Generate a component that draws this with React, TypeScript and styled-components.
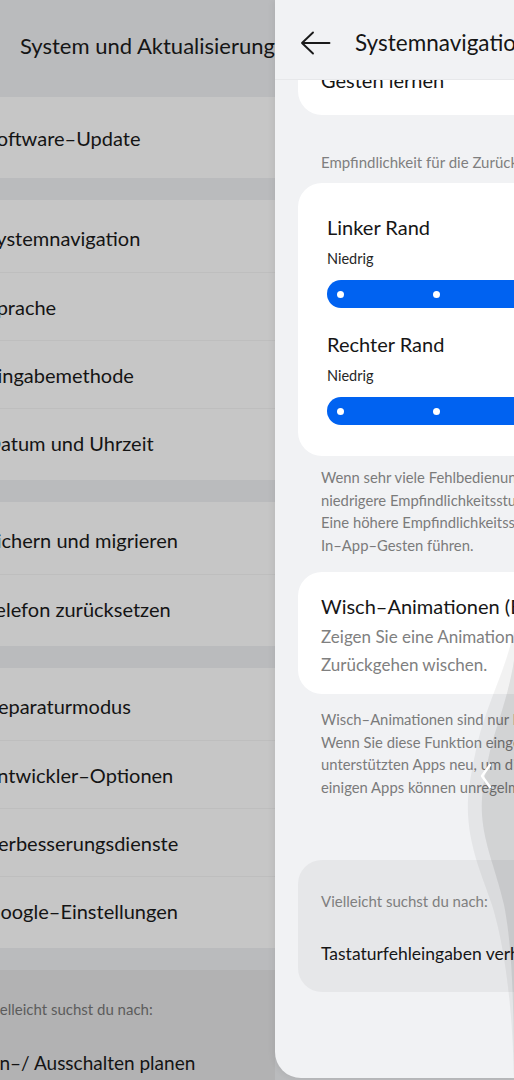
import React from "react";
import styled, { createGlobalStyle } from "styled-components";

const Global = createGlobalStyle`
  html, body { margin: 0; padding: 0; }
  body {
    width: 514px;
    height: 1080px;
    overflow: hidden;
    font-family: Lato, "Noto Sans", "Liberation Sans", sans-serif;
    -webkit-font-smoothing: antialiased;
  }
`;

const Screen = styled.div`
  position: relative;
  display: flex;
  width: 514px;
  height: 1080px;
  overflow: hidden;
  background: #babbbd;
`;

/* ---------- previous (dimmed) page ---------- */
const BackPage = styled.div`
  width: 275px;
  flex-shrink: 0;
  overflow: hidden;
  display: flex;
  flex-direction: column;
  background: #babbbd;
`;

const BackHeader = styled.div`
  height: 97px;
  box-sizing: border-box;
  flex-shrink: 0;
  display: flex;
  align-items: center;
  padding: 0 0 7px 20px;
  font-size: 22px;
  color: #151515;
  white-space: nowrap;
`;

const BackList = styled.div`
  display: flex;
  flex-direction: column;
  gap: 22px;
  margin-left: -38px;
  width: 340px;
`;

const BackCard = styled.div<{ $tone?: "dim" }>`
  background: ${(p) => (p.$tone === "dim" ? "#b2b2b3" : "#c6c6c6")};
  border-radius: 24px;
  padding: 4px 0;
`;

const BackRow = styled.div<{ $h?: number }>`
  height: ${(p) => p.$h ?? 68}px;
  box-sizing: border-box;
  display: flex;
  align-items: center;
  padding-left: 24px;
  font-size: 20px;
  color: #141414;
  white-space: nowrap;
  & + & {
    border-top: 1px solid #bebebe;
  }
`;

const BackSuggest = styled.div`
  padding: 25px 0 0 24px;
  height: 120px;
  white-space: nowrap;
`;

const BackSuggestLabel = styled.div`
  font-size: 15px;
  line-height: 20px;
  color: #5c5c5c;
`;

const BackSuggestItem = styled.div`
  margin-top: 31px;
  margin-left: -2px;
  font-size: 19px;
  line-height: 26px;
  color: #141414;
`;

/* ---------- current page sliding in ---------- */
const FrontPage = styled.div`
  position: relative;
  flex: 1;
  height: 1078px;
  background: #f1f2f4;
  border-bottom-left-radius: 26px;
  overflow: hidden;
  display: flex;
  flex-direction: column;
  box-shadow: -2px 0 6px rgba(0, 0, 0, 0.06);
`;

const FrontHeader = styled.div`
  position: relative;
  z-index: 1;
  height: 80px;
  box-sizing: border-box;
  flex-shrink: 0;
  display: flex;
  align-items: center;
  gap: 24px;
  padding: 6px 0 0 25px;
  background: #f1f2f4;
  border-bottom: 1px solid #e7e8ea;
  white-space: nowrap;
`;

const ArrowBox = styled.svg`
  flex-shrink: 0;
  width: 31px;
  height: 24px;
`;

const FrontTitle = styled.div`
  flex-shrink: 0;
  font-size: 22.5px;
  color: #161616;
`;

const FrontBody = styled.div`
  flex: 1;
  overflow: hidden;
`;

const FrontScroll = styled.div`
  width: 470px;
  margin: -35px 0 0 23px;
  display: flex;
  flex-direction: column;
  white-space: nowrap;
`;

const Card = styled.div<{ $pad?: number; $tone?: "gray"; $mt?: number }>`
  margin-top: ${(p) => p.$mt ?? 0}px;
  background: ${(p) => (p.$tone === "gray" ? "#e6e7e9" : "#ffffff")};
  border-radius: 24px;
  padding-left: ${(p) => p.$pad ?? 23}px;
`;

const GestureRow = styled.div`
  height: 70px;
  display: flex;
  align-items: center;
  font-size: 20px;
  color: #161616;
`;

const SectionLabel = styled.div`
  margin: 37px 0 11px 23px;
  font-size: 15px;
  line-height: 20px;
  color: #7f7f7f;
`;

const SliderBlock = styled.div`
  padding: 31px 0 31px 0;
`;

const EdgeTitle = styled.div<{ $mt?: number }>`
  margin-top: ${(p) => p.$mt ?? 0}px;
  font-size: 20px;
  line-height: 26px;
  color: #161616;
`;

const Level = styled.div`
  margin-top: 9px;
  font-size: 14.5px;
  line-height: 20px;
  color: #262626;
`;

const Track = styled.div`
  margin-top: 11px;
  height: 28px;
  border-radius: 14px 0 0 14px;
  background: #0062f1;
  display: flex;
  align-items: center;
  gap: 89px;
  padding-left: 10px;
`;

const Dot = styled.span`
  width: 7px;
  height: 7px;
  border-radius: 50%;
  background: #ffffff;
`;

const Note = styled.div<{ $mt: number }>`
  margin: ${(p) => p.$mt}px 0 0 23px;
  font-size: 14.8px;
  line-height: 22.7px;
  color: #7b7b7b;
`;

const SwitchCard = styled.div`
  padding: 20px 0 15px 0;
`;

const SwitchTitle = styled.div`
  font-size: 20px;
  line-height: 28px;
  color: #161616;
`;

const SwitchDesc = styled.div`
  margin-top: 3px;
  font-size: 17px;
  line-height: 28px;
  color: #808080;
`;

const SuggestBlock = styled.div`
  padding: 31px 0 26px 0;
`;

const SuggestLabel = styled.div`
  font-size: 15px;
  line-height: 20px;
  color: #7f7f7f;
`;

const SuggestItem = styled.div`
  margin-top: 31px;
  font-size: 17.5px;
  line-height: 24px;
  color: #161616;
`;

const Gesture = styled.svg`
  position: absolute;
  left: 440px;
  top: 620px;
  width: 74px;
  height: 460px;
  pointer-events: none;
`;

const BackArrow = () => (
  <ArrowBox viewBox="0 0 31 24" fill="none">
    <path
      d="M2 12 H29.5 M13 1.5 L2 12 L13 22.5"
      stroke="#1a1a1a"
      strokeWidth="1.9"
      strokeLinecap="round"
      strokeLinejoin="round"
    />
  </ArrowBox>
);

const Slider = () => (
  <Track>
    <Dot />
    <Dot />
    <Dot />
  </Track>
);

export default function App() {
  return (
    <>
      <Global />
      <Screen>
        <BackPage>
          <BackHeader>System und Aktualisierung</BackHeader>
          <BackList>
            <BackCard>
              <BackRow $h={73}>Software–Update</BackRow>
            </BackCard>
            <BackCard>
              <BackRow>Systemnavigation</BackRow>
              <BackRow>Sprache</BackRow>
              <BackRow>Eingabemethode</BackRow>
              <BackRow>Datum und Uhrzeit</BackRow>
            </BackCard>
            <BackCard>
              <BackRow>Sichern und migrieren</BackRow>
              <BackRow>Telefon zurücksetzen</BackRow>
            </BackCard>
            <BackCard>
              <BackRow>Reparaturmodus</BackRow>
              <BackRow>Entwickler–Optionen</BackRow>
              <BackRow>Verbesserungsdienste</BackRow>
              <BackRow>Google–Einstellungen</BackRow>
            </BackCard>
            <BackCard $tone="dim">
              <BackSuggest>
                <BackSuggestLabel>Vielleicht suchst du nach:</BackSuggestLabel>
                <BackSuggestItem>Ein–/ Ausschalten planen</BackSuggestItem>
              </BackSuggest>
            </BackCard>
          </BackList>
        </BackPage>

        <FrontPage>
          <FrontHeader>
            <BackArrow />
            <FrontTitle>Systemnavigation</FrontTitle>
          </FrontHeader>
          <FrontBody>
            <FrontScroll>
              <Card>
                <GestureRow>Gesten lernen</GestureRow>
              </Card>

              <SectionLabel>Empfindlichkeit für die Zurück-Geste</SectionLabel>

              <Card $pad={29}>
                <SliderBlock>
                  <EdgeTitle>Linker Rand</EdgeTitle>
                  <Level>Niedrig</Level>
                  <Slider />
                  <EdgeTitle $mt={23}>Rechter Rand</EdgeTitle>
                  <Level>Niedrig</Level>
                  <Slider />
                </SliderBlock>
              </Card>

              <Note $mt={10}>
                <div>Wenn sehr viele Fehlbedienungen auftreten, wählen Sie eine</div>
                <div>niedrigere Empfindlichkeitsstufe aus.</div>
                <div>Eine höhere Empfindlichkeitsstufe kann zu Konflikten mit</div>
                <div>In–App–Gesten führen.</div>
              </Note>

              <Card $mt={15}>
                <SwitchCard>
                  <SwitchTitle>Wisch–Animationen (Beta)</SwitchTitle>
                  <SwitchDesc>
                    <div>Zeigen Sie eine Animation an, wenn Sie zum</div>
                    <div>Zurückgehen wischen.</div>
                  </SwitchDesc>
                </SwitchCard>
              </Card>

              <Note $mt={14}>
                <div>Wisch–Animationen sind nur bei einigen Apps verfügbar.</div>
                <div>Wenn Sie diese Funktion eingeschaltet haben, starten Sie die</div>
                <div>unterstützten Apps neu, um die Funktion zu nutzen. Bei</div>
                <div>einigen Apps können unregelmäßige Animationen auftreten.</div>
              </Note>

              <Card $tone="gray" $mt={61}>
                <SuggestBlock>
                  <SuggestLabel>Vielleicht suchst du nach:</SuggestLabel>
                  <SuggestItem>Tastaturfehleingaben verhindern</SuggestItem>
                </SuggestBlock>
              </Card>
            </FrontScroll>
          </FrontBody>
        </FrontPage>

        <Gesture viewBox="0 0 74 460">
          <path
            d="M74 10 C66 50 46 85 37 125 C30 158 27 175 28 195 C30 230 42 255 52 285 C62 318 72 370 74 460 Z"
            fill="rgba(0,0,0,0.05)"
          />
          <path
            d="M74 40 C68 80 54 110 48 140 C43 165 41 178 42 195 C44 225 56 250 64 285 C71 320 74 370 74 460 Z"
            fill="rgba(0,0,0,0.08)"
          />
          <path
            d="M50 145 L42 156 L50 167"
            stroke="#ffffff"
            strokeWidth="2.4"
            fill="none"
            strokeLinecap="round"
            strokeLinejoin="round"
          />
        </Gesture>
      </Screen>
    </>
  );
}
